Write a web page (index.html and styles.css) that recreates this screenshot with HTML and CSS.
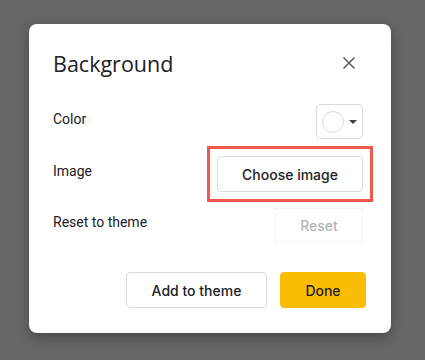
FILE: index.html
```html
<!DOCTYPE html>
<html lang="en">
<head>
    <meta charset="UTF-8">
    <meta name="viewport" content="width=device-width, initial-scale=1.0">
    <title>Background</title>
    <link rel="stylesheet" href="styles.css">
</head>
<body>
    <div class="dialog">
        <div class="dialog-header">
            <h1>Background</h1>
            <svg class="close-icon" width="14" height="14" viewBox="0 0 14 14">
                <path d="M1.5 1.5 L12.5 12.5 M12.5 1.5 L1.5 12.5" stroke="#5f6368" stroke-width="1.6" fill="none"/>
            </svg>
        </div>

        <div class="row row-color">
            <span class="row-label">Color</span>
            <div class="swatch">
                <span class="swatch-circle"></span>
                <span class="swatch-arrow"></span>
            </div>
        </div>

        <div class="row row-image">
            <span class="row-label">Image</span>
            <div class="highlight">
                <button class="btn btn-choose">Choose image</button>
            </div>
        </div>

        <div class="row row-reset">
            <span class="row-label">Reset to theme</span>
            <button class="btn btn-reset">Reset</button>
        </div>

        <div class="dialog-footer">
            <button class="btn btn-add">Add to theme</button>
            <button class="btn btn-done">Done</button>
        </div>
    </div>
</body>
</html>
```

FILE: styles.css
```css
* {
    margin: 0;
    padding: 0;
    box-sizing: border-box;
    font-family: 'Roboto', 'Liberation Sans', sans-serif;
}

body {
    background-color: #666666;
    width: 425px;
    height: 360px;
    overflow: hidden;
}

.dialog {
    margin: 24px 0 0 29px;
    width: 362px;
    height: 309px;
    background-color: #fff;
    border-radius: 8px;
    padding: 25px 28px 24px 24px;
    box-shadow: 0 4px 12px rgba(0, 0, 0, 0.3);
    display: flex;
    flex-direction: column;
}

.dialog-header {
    display: flex;
    justify-content: space-between;
    align-items: center;
    height: 28px;
}

h1 {
    font-family: 'Open Sans', 'Roboto', sans-serif;
    font-size: 21.5px;
    font-weight: 400;
    color: #202124;
}

.close-icon {
    margin-right: 7px;
}

.row {
    display: flex;
    justify-content: space-between;
    align-items: center;
}

.row-label {
    font-size: 14px;
    color: #202124;
    padding-bottom: 6px;
}

.row-color {
    margin-top: 27px;
}

.swatch {
    width: 47px;
    height: 35px;
    border: 1px solid #dadce0;
    border-radius: 4px;
    display: flex;
    align-items: center;
    padding-left: 5px;
    gap: 5px;
}

.swatch-circle {
    width: 22px;
    height: 22px;
    border: 1px solid #dadce0;
    border-radius: 50%;
}

.swatch-arrow {
    width: 0;
    height: 0;
    border-left: 4px solid transparent;
    border-right: 4px solid transparent;
    border-top: 4px solid #3c4043;
}

.row-image {
    margin-top: 7px;
}

.highlight {
    border: 3px solid #f2574b;
    padding: 7px;
    margin-right: -10px;
}

.btn {
    font-family: 'Inter', 'Roboto', sans-serif;
    font-size: 14px;
    font-weight: 500;
    color: #202124;
    background-color: #fff;
    border: 1px solid #dadce0;
    border-radius: 4px;
    height: 36px;
}

.btn-choose {
    width: 146px;
    display: block;
}

.row-reset {
    margin-top: 6px;
}

.btn-reset {
    width: 88px;
    height: 34px;
    color: #b4b4b4;
    border: 1px dotted #ececec;
    border-radius: 0;
}

.dialog-footer {
    margin-top: 30px;
    display: flex;
    justify-content: flex-end;
    gap: 13px;
    margin-right: -3px;
}

.btn-add {
    width: 141px;
}

.btn-done {
    width: 86px;
    background-color: #fbbc04;
    border-color: #fbbc04;
}
```
